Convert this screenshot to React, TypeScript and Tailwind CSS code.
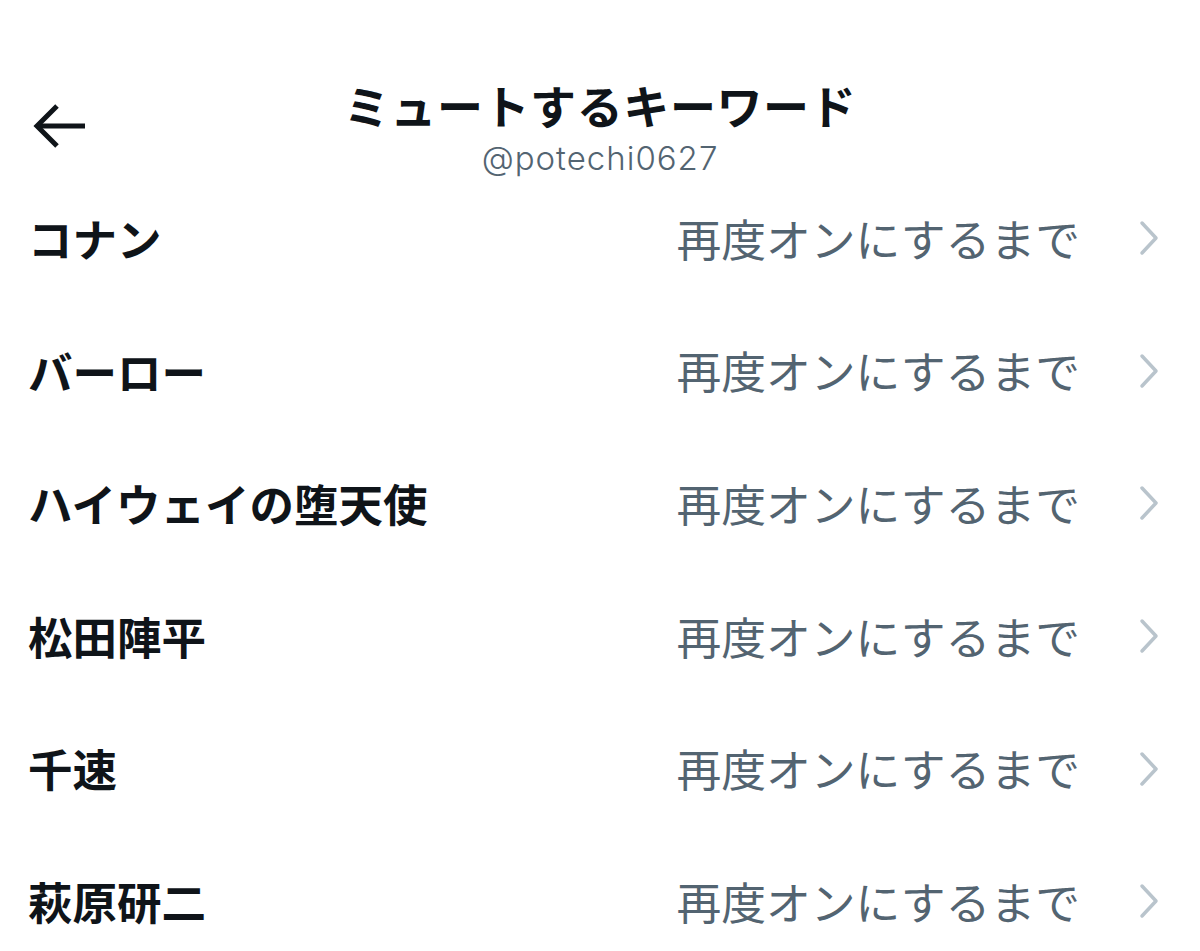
import React from 'react';

const FONT = { fontFamily: '"Noto Sans CJK JP", "Noto Sans", sans-serif' };

const keywords = ['コナン', 'バーロー', 'ハイウェイの堕天使', '松田陣平', '千速', '萩原研二'];

const BackArrow = () => (
  <svg width="56" height="48" viewBox="0 0 56 48" fill="none" stroke="#0f1419" strokeWidth="5" strokeLinecap="butt" strokeLinejoin="miter">
    <path d="M4 24 H52" />
    <path d="M24 4 L4 24 L24 44" />
  </svg>
);

const Chevron = () => (
  <svg width="22" height="36" viewBox="0 0 22 36" fill="none" stroke="#b9c4cc" strokeWidth="3.5" strokeLinecap="round" strokeLinejoin="round">
    <path d="M4 3 L18 18 L4 33" />
  </svg>
);

export default function App() {
  return (
    <div className="w-[1200px] h-[951px] bg-white overflow-hidden" style={FONT}>
      {/* Header */}
      <div className="h-[172px] grid grid-cols-[1fr_auto_1fr]">
        <div className="pl-[33px] pt-[102px]">
          <BackArrow />
        </div>
        <div className="flex flex-col items-center pt-[78px]">
          <div className="text-[46px] leading-[52px] font-bold text-[#0f1419] tracking-[0.6px]">ミュートするキーワード</div>
          <div
            className="mt-[8px] text-[33px] leading-[40px] font-light text-[#536471] tracking-[1px]"
            style={{ fontFamily: 'Inter, Roboto, "Noto Sans", sans-serif' }}
          >
            @potechi0627
          </div>
        </div>
        <div />
      </div>

      {/* Keyword list */}
      <div className="flex flex-col">
        {keywords.map((k) => (
          <div key={k} className="h-[132.6px] flex items-center pl-[28px] pr-[40px]">
            <div className="flex-1 text-[44.5px] font-bold text-[#0f1419] leading-none">{k}</div>
            <div className="text-[44.8px] text-[#536471] leading-none">再度オンにするまで</div>
            <div className="ml-[58px] flex items-center">
              <Chevron />
            </div>
          </div>
        ))}
      </div>
    </div>
  );
}
